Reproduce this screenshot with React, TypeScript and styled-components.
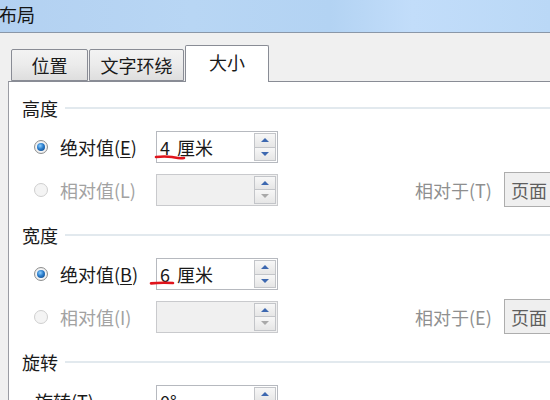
import React from "react";
import styled, { createGlobalStyle } from "styled-components";

const GlobalStyle = createGlobalStyle`
  html, body {
    margin: 0;
    padding: 0;
  }
  body {
    background: #f0f0f0;
    font-family: "Noto Sans CJK SC", "Noto Sans", sans-serif;
  }
`;

const Window = styled.div`
  width: 550px;
  height: 400px;
  overflow: hidden;
  background: #f0f0f0;
`;

const TitleBar = styled.div`
  height: 33px;
  box-sizing: border-box;
  padding: 0 0 5px 0;
  border-bottom: 1px solid #8a97a8;
  background: linear-gradient(
    90deg,
    #b3d1f1 0%,
    #b8d6f4 35%,
    #b3d3f3 60%,
    #c2ddfa 75%,
    #bad8f6 100%
  );
  display: flex;
  align-items: center;
  font-size: 18px;
  color: #151515;
  text-indent: -1px;
`;

const Body = styled.div`
  padding: 12px 0 0 8px;
`;

const TabStrip = styled.div`
  display: flex;
  align-items: flex-end;
  height: 36px;
  padding-left: 3px;
  position: relative;
  z-index: 1;
`;

const Tab = styled.div<{ $active?: boolean; $w: number }>`
  width: ${(p) => p.$w}px;
  box-sizing: border-box;
  height: ${(p) => (p.$active ? 37 : 32)}px;
  margin-bottom: ${(p) => (p.$active ? -1 : 0)}px;
  margin-right: 1px;
  border: 1px solid #898c95;
  border-bottom: ${(p) => (p.$active ? "none" : "1px solid #898c95")};
  border-radius: 2px 2px 0 0;
  background: ${(p) =>
    p.$active ? "#ffffff" : "linear-gradient(#f3f3f3, #ebebeb 50%, #dedede)"};
  display: flex;
  align-items: center;
  justify-content: center;
  padding-bottom: ${(p) => (p.$active ? 4 : 0)}px;
  font-size: 18px;
  color: #1a1a1a;
`;

const Panel = styled.div`
  width: 700px;
  height: 400px;
  background: #ffffff;
  border-top: 1px solid #898c95;
  border-left: 1px solid #9a9ca3;
  padding: 16px 0 0 13px;
  box-sizing: border-box;
`;

const Section = styled.div`
  margin-bottom: 21px;
`;

const Heading = styled.div`
  display: flex;
  align-items: center;
  gap: 7px;
  height: 20px;
  font-size: 18px;
  color: #1a1a1a;
  margin-bottom: 13px;

  &::after {
    content: "";
    flex: 1;
    height: 2px;
    background: #e2e9ee;
  }
`;

const Rows = styled.div`
  display: flex;
  flex-direction: column;
  gap: 9px;
`;

const Row = styled.div`
  display: grid;
  grid-template-columns: 122px 122px 137px 89px 80px;
  align-items: center;
  height: 32px;
  padding-left: 12px;
`;

const Choice = styled.div<{ $disabled?: boolean }>`
  display: flex;
  align-items: center;
  gap: 12px;
  font-size: 18px;
  color: ${(p) => (p.$disabled ? "#a2a2a2" : "#1a1a1a")};
  white-space: nowrap;

  u {
    text-underline-offset: 2px;
  }
`;

const Radio = styled.span<{ $checked?: boolean; $disabled?: boolean }>`
  width: 14px;
  height: 14px;
  box-sizing: border-box;
  border-radius: 50%;
  border: 1px solid ${(p) => (p.$disabled ? "#cfcfcf" : "#8e8f8f")};
  background: ${(p) =>
    p.$disabled
      ? "#f4f4f4"
      : "radial-gradient(circle at 50% 50%, #ffffff 40%, #d8d8d8 100%)"};
  display: flex;
  align-items: center;
  justify-content: center;

  &::after {
    content: "";
    display: ${(p) => (p.$checked ? "block" : "none")};
    width: 8px;
    height: 8px;
    border-radius: 50%;
    background: radial-gradient(circle at 40% 35%, #8fd0ff 0%, #2a7ccb 45%, #0d3f7a 100%);
  }
`;

const Field = styled.div<{ $disabled?: boolean }>`
  position: relative;
  width: 122px;
  height: 32px;
  box-sizing: border-box;
  border: 1px solid ${(p) => (p.$disabled ? "#c9cacd" : "#b6b9bf")};
  background: ${(p) => (p.$disabled ? "#f0f0f0" : "#ffffff")};
  display: flex;
  align-items: center;
`;

const FieldText = styled.span`
  flex: 1;
  display: flex;
  gap: 7px;
  padding-left: 3px;
  font-size: 18px;
  color: #1a1a1a;
  white-space: nowrap;
`;

const Spin = styled.div`
  align-self: stretch;
  width: 22px;
  margin: 1px 1px 1px 0;
  display: flex;
  flex-direction: column;
`;

const SpinButton = styled.div<{ $down?: boolean; $muted?: boolean }>`
  flex: 1;
  border: 1px solid #c3c5c9;
  margin-top: ${(p) => (p.$down ? -1 : 0)}px;
  background: linear-gradient(#f7f7f7, #e6e6e6);
  display: flex;
  align-items: center;
  justify-content: center;

  &::after {
    content: "";
    width: 0;
    height: 0;
    border-left: 4px solid transparent;
    border-right: 4px solid transparent;
    ${(p) =>
      p.$down
        ? `border-top: 4px solid ${p.$muted ? "#a9a9a9" : "#3d68b0"};`
        : `border-bottom: 4px solid ${p.$muted ? "#a9a9a9" : "#3d68b0"};`}
  }
`;

const RedMark = styled.svg<{ $left: number; $top: number }>`
  position: absolute;
  left: ${(p) => p.$left}px;
  top: ${(p) => p.$top}px;
  width: 34px;
  height: 8px;
  overflow: visible;
`;

const RelLabel = styled.span`
  grid-column: 4;
  font-size: 18px;
  color: #8f8f8f;
  white-space: nowrap;
`;

const Combo = styled.div`
  grid-column: 5;
  height: 35px;
  box-sizing: border-box;
  border: 1px solid #adadad;
  background: #efefef;
  display: flex;
  align-items: center;
  padding-left: 6px;
  font-size: 18px;
  color: #5e5e5e;
`;

const PlainLabel = styled.span`
  font-size: 18px;
  color: #1a1a1a;
  padding-left: 1px;
`;

type SpinFieldProps = {
  value?: string;
  unit?: string;
  disabled?: boolean;
  mark?: { left: number; top: number; d: string };
};

const SpinField: React.FC<SpinFieldProps> = ({ value, unit, disabled, mark }) => (
  <Field $disabled={disabled}>
    <FieldText>
      {value && <span>{value}</span>}
      {unit && <span>{unit}</span>}
    </FieldText>
    <Spin>
      <SpinButton />
      <SpinButton $down $muted={disabled} />
    </Spin>
    {mark && (
      <RedMark $left={mark.left} $top={mark.top} viewBox="0 0 34 8">
        <path
          d={mark.d}
          fill="none"
          stroke="#e0141c"
          strokeWidth={2.6}
          strokeLinecap="round"
        />
      </RedMark>
    )}
  </Field>
);

export default function App() {
  return (
    <>
      <GlobalStyle />
      <Window>
        <TitleBar>布局</TitleBar>
        <Body>
          <TabStrip>
            <Tab $w={77}>位置</Tab>
            <Tab $w={95}>文字环绕</Tab>
            <Tab $w={84} $active>
              大小
            </Tab>
          </TabStrip>
          <Panel>
            <Section>
              <Heading>高度</Heading>
              <Rows>
                <Row>
                  <Choice>
                    <Radio $checked />
                    <span>
                      绝对值(<u>E</u>)
                    </span>
                  </Choice>
                  <SpinField
                    value="4"
                    unit="厘米"
                    mark={{ left: -2, top: 22, d: "M1 3 C 7 2.2, 13 2.4, 17 3 S 23 4.8, 29 4" }}
                  />
                </Row>
                <Row>
                  <Choice $disabled>
                    <Radio $disabled />
                    <span>相对值(L)</span>
                  </Choice>
                  <SpinField disabled />
                  <RelLabel>相对于(T)</RelLabel>
                  <Combo>页面</Combo>
                </Row>
              </Rows>
            </Section>
            <Section>
              <Heading>宽度</Heading>
              <Rows>
                <Row>
                  <Choice>
                    <Radio $checked />
                    <span>
                      绝对值(<u>B</u>)
                    </span>
                  </Choice>
                  <SpinField
                    value="6"
                    unit="厘米"
                    mark={{ left: -7, top: 21, d: "M1 3.4 C 8 2.6, 16 2.6, 23 3" }}
                  />
                </Row>
                <Row>
                  <Choice $disabled>
                    <Radio $disabled />
                    <span>相对值(I)</span>
                  </Choice>
                  <SpinField disabled />
                  <RelLabel>相对于(E)</RelLabel>
                  <Combo>页面</Combo>
                </Row>
              </Rows>
            </Section>
            <Section>
              <Heading>旋转</Heading>
              <Rows>
                <Row>
                  <PlainLabel>旋转(T)</PlainLabel>
                  <SpinField value="0°" />
                </Row>
              </Rows>
            </Section>
          </Panel>
        </Body>
      </Window>
    </>
  );
}
